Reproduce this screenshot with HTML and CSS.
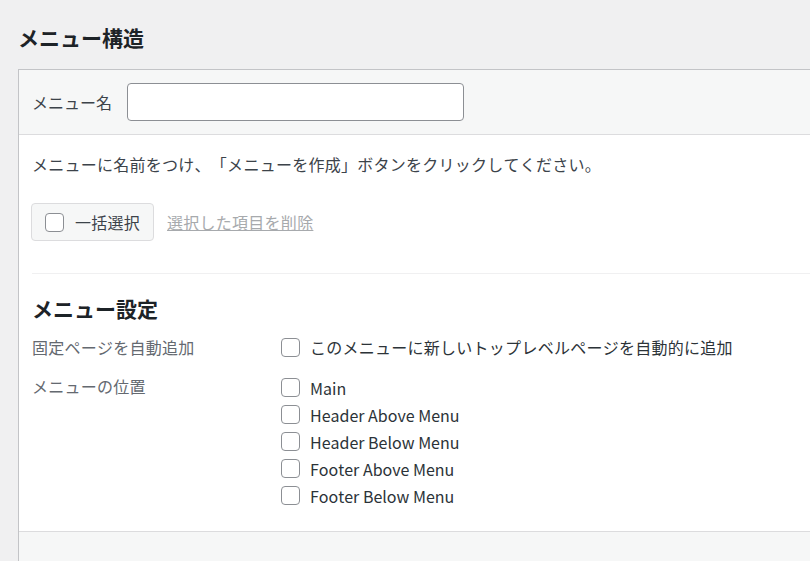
FILE: index.html
```html
<!DOCTYPE html>
<html lang="ja">
<head>
<meta charset="utf-8">
<link rel="stylesheet" href="styles.css">
</head>
<body>
<div class="page">
  <h2 class="title">メニュー構造</h2>
  <div class="box">
    <div class="box-header">
      <label class="name-label">メニュー名</label>
      <input class="name-input" type="text">
    </div>
    <div class="box-body">
      <p class="hint">メニューに名前をつけ、「メニューを作成」ボタンをクリックしてください。</p>
      <div class="bulk">
        <label class="bulk-btn"><input type="checkbox" class="cb"><span>一括選択</span></label>
        <a class="bulk-link">選択した項目を削除</a>
      </div>
      <div class="divider"></div>
      <h3 class="sub">メニュー設定</h3>
      <div class="setting auto">
        <div class="set-label">固定ページを自動追加</div>
        <div class="set-field">
          <label class="opt"><input type="checkbox" class="cb"><span>このメニューに新しいトップレベルページを自動的に追加</span></label>
        </div>
      </div>
      <div class="setting">
        <div class="set-label">メニューの位置</div>
        <div class="set-field list">
          <label class="opt"><input type="checkbox" class="cb"><span>Main</span></label>
          <label class="opt"><input type="checkbox" class="cb"><span>Header Above Menu</span></label>
          <label class="opt"><input type="checkbox" class="cb"><span>Header Below Menu</span></label>
          <label class="opt"><input type="checkbox" class="cb"><span>Footer Above Menu</span></label>
          <label class="opt"><input type="checkbox" class="cb"><span>Footer Below Menu</span></label>
        </div>
      </div>
    </div>
    <div class="box-footer"></div>
  </div>
</div>
</body>
</html>
```
FILE: styles.css
```css
html, body {
  margin: 0;
  padding: 0;
  background: #f0f0f1;
  overflow: hidden;
  height: 561px;
}
body {
  font-family: "Noto Sans CJK JP", "Noto Sans", sans-serif;
  font-size: 16px;
  color: #3c434a;
  text-spacing-trim: space-all;
  font-kerning: none;
  letter-spacing: 0.26px;
}
.page {
  padding: 22px 0 0 18px;
}
.title {
  margin: 0;
  font-size: 21px;
  line-height: 30px;
  font-weight: 700;
  color: #1d2327;
  letter-spacing: 0;
}
.box {
  margin-top: 17px;
  width: 900px;
  border: 1px solid #c3c4c7;
  background: #fff;
}
.box-header {
  height: 65px;
  box-sizing: border-box;
  background: #f6f7f7;
  border-bottom: 1px solid #dcdcde;
  display: flex;
  align-items: center;
  padding: 0 13px;
}
.name-label {
  color: #3c434a;
  line-height: 24px;
  letter-spacing: 0;
}
.name-input {
  margin-left: 15px;
  width: 337px;
  height: 38px;
  box-sizing: border-box;
  border: 1px solid #8c8f94;
  border-radius: 4px;
  background: #fff;
  padding: 0 8px;
  font-size: 16px;
  outline: none;
}
.box-body {
  padding: 17px 0 22px 13px;
}
.hint {
  margin: 0;
  line-height: 24px;
  color: #3c434a;
}
.bulk {
  margin-top: 27px;
  display: flex;
  align-items: center;
}
.bulk-btn {
  display: flex;
  align-items: center;
  height: 38px;
  box-sizing: border-box;
  padding: 0 13px 0 13px;
  margin-left: -1px;
  background: #f6f7f7;
  border: 1px solid #dcdcde;
  border-radius: 4px;
  color: #3c434a;
}
.bulk-btn span {
  margin-left: 11px;
}
.bulk-link {
  margin-left: 13px;
  color: #a7aaad;
  text-decoration: underline;
  line-height: 24px;
}
.cb {
  -webkit-appearance: none;
  appearance: none;
  margin: 0;
  width: 19px;
  height: 19px;
  box-sizing: border-box;
  border: 1px solid #8c8f94;
  border-radius: 4px;
  background: #fff;
  flex: none;
}
.divider {
  margin-top: 32px;
  height: 1px;
  background: #f0f0f1;
}
.sub {
  margin: 19px 0 0 0;
  font-size: 21px;
  line-height: 30px;
  font-weight: 700;
  color: #1d2327;
  letter-spacing: 0;
}
.setting {
  display: flex;
  align-items: flex-start;
}
.setting.auto {
  margin-top: 12px;
  margin-bottom: 15px;
}
.set-label {
  width: 249px;
  flex: none;
  color: #646970;
  line-height: 24px;
}
.set-field.list .opt {
  height: 27px;
  letter-spacing: 0;
}
.opt {
  display: flex;
  align-items: center;
  height: 24px;
  color: #2c3338;
}
.opt span {
  margin-left: 10px;
}
.box-footer {
  height: 40px;
  background: #f6f7f7;
  border-top: 1px solid #dcdcde;
}
```
